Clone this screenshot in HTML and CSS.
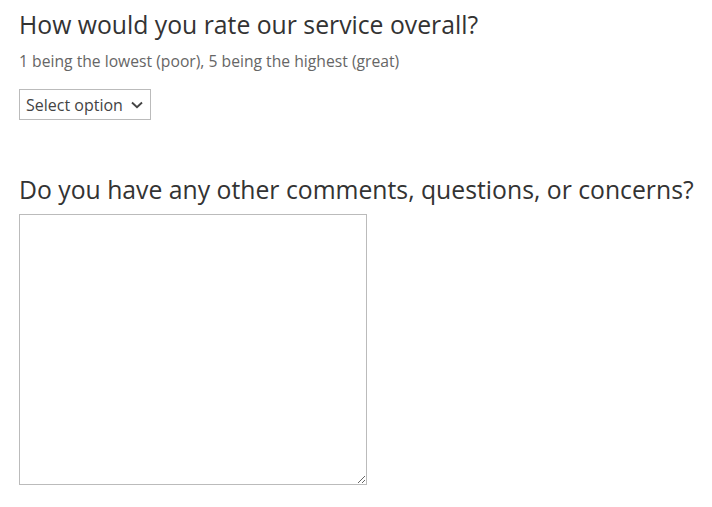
FILE: index.html
```html
<!DOCTYPE html>
<html>
<head>
<link rel="stylesheet" href="styles.css">
</head>
<body>
<form class="form">
  <div class="field">
    <label class="label">How would you rate our service overall?</label>
    <p class="desc">1 being the lowest (poor), 5 being the highest (great)</p>
    <div class="select">
      <span>Select option</span>
      <svg class="chev" width="12" height="8" viewBox="0 0 12 8"><path d="M1 1.5 L6 6.2 L11 1.5" fill="none" stroke="#444" stroke-width="1.9"/></svg>
    </div>
  </div>
  <div class="field field2">
    <label class="label">Do you have any other comments, questions, or concerns?</label>
    <textarea class="area"></textarea>
  </div>
</form>
</body>
</html>
```
FILE: styles.css
```css
html, body { margin: 0; padding: 0; background: #fff; }
body { font-family: "Open Sans", sans-serif; color: #333; }
.form { padding: 8px 0 8px 19px; }
.label { display: block; font-size: 24.75px; line-height: 34px; color: #333; white-space: nowrap; }
.desc { margin: 8px 0 0; font-size: 15.7px; line-height: 22px; color: #666; }
.select {
  margin-top: 17px;
  display: inline-flex; align-items: center; gap: 8px;
  padding: 0 7px 0 6px;
  border: 1px solid #bbb; box-sizing: border-box; height: 31px;
  font-size: 16px; color: #444;
}
.chev { margin-top: 1px; }
.field2 { margin-top: 53px; }
.area {
  display: block; margin-top: 7px;
  width: 348px; height: 271px; box-sizing: border-box;
  border: 1px solid #bbb; padding: 0; resize: both;
}
```
